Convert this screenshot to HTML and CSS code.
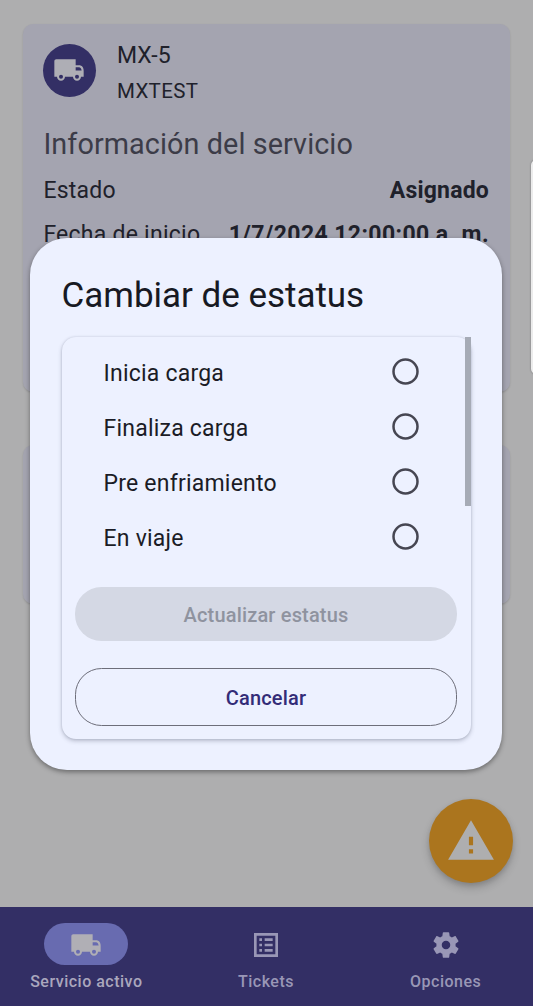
FILE: index.html
```html
<!DOCTYPE html>
<html lang="es">
<head>
<meta charset="utf-8">
<title>Servicio activo</title>
<link rel="stylesheet" href="styles.css">
</head>
<body>
<div class="app">
  <main class="content">
    <section class="card service">
      <header class="unit">
        <span class="avatar"><svg viewBox="0 0 24 24"><path fill-rule="evenodd" d="M19.500 8.500H17V4H2.500C1.600 4 1 4.600 1 5.500V17h2c0 1.660 1.340 3 3 3s3-1.340 3-3h6c0 1.660 1.340 3 3 3s3-1.340 3-3h2v-4.500c0-2.400-1.300-4-3.500-4zM6 18.500a1.500 1.500 0 1 1 0-3 1.500 1.500 0 0 1 0 3zM17 10h2.500c1 0 1.600.8 2 2.300H17V10zm1 8.500a1.500 1.500 0 1 1 0-3 1.500 1.500 0 0 1 0 3z"/></svg></span>
        <div class="unit-text"><div class="unit-name">MX-5</div><div class="unit-id">MXTEST</div></div>
      </header>
      <h2 class="info-title">Información del servicio</h2>
      <div class="row"><span>Estado</span><b>Asignado</b></div>
      <div class="row"><span>Fecha de inicio</span><b class="date">1/7/2024 12:00:00 a. m.</b></div>
    </section>
    <section class="card actions"></section>
    <button class="fab" aria-label="Alerta"><svg viewBox="0 0 24 24"><path d="M1 21h22L12 2 1 21zm12-3h-2v-2h2v2zm0-4h-2v-4h2v4z"/></svg></button>
  </main>
  <nav class="nav">
    <a class="nav-item active"><span class="pill"><svg viewBox="0 0 24 24"><path fill-rule="evenodd" d="M19.500 8.500H17V4H2.500C1.600 4 1 4.600 1 5.500V17h2c0 1.660 1.340 3 3 3s3-1.340 3-3h6c0 1.660 1.340 3 3 3s3-1.340 3-3h2v-4.500c0-2.400-1.300-4-3.500-4zM6 18.500a1.500 1.500 0 1 1 0-3 1.500 1.500 0 0 1 0 3zM17 10h2.500c1 0 1.600.8 2 2.300H17V10zm1 8.500a1.500 1.500 0 1 1 0-3 1.500 1.500 0 0 1 0 3z"/></svg></span><span class="nav-label">Servicio activo</span></a>
    <a class="nav-item"><span class="pill"><svg viewBox="0 0 24 24"><path fill-rule="evenodd" d="M3 3h18v18H3zM5 5v14h14V5zM7 7h2v2H7zM11 7h6v2h-6zM7 11h2v2H7zM11 11h6v2h-6zM7 15h2v2H7zM11 15h6v2h-6z"/></svg></span><span class="nav-label">Tickets</span></a>
    <a class="nav-item"><span class="pill"><svg viewBox="0 0 24 24"><path d="M19.140 12.940c.04-.3.060-.61.060-.94 0-.32-.02-.64-.07-.94l2.030-1.580c.18-.14.230-.41.120-.61l-1.920-3.320c-.12-.22-.37-.29-.59-.22l-2.390.96c-.5-.38-1.030-.7-1.620-.94l-.36-2.540c-.04-.24-.24-.41-.48-.41h-3.840c-.24 0-.43.170-.47.410l-.36 2.540c-.59.240-1.130.570-1.620.940l-2.390-.96c-.22-.08-.47 0-.59.220L2.740 8.870c-.12.210-.08.470.120.610l2.030 1.580c-.05.300-.09.630-.09.940s.02.640.070.940l-2.030 1.580c-.18.140-.23.410-.12.610l1.920 3.320c.12.220.370.290.590.220l2.390-.96c.5.380 1.030.700 1.620.940l.36 2.540c.05.240.240.410.480.410h3.840c.24 0 .44-.17.470-.41l.36-2.540c.59-.24 1.130-.56 1.620-.94l2.390.96c.22.080.470 0 .59-.22l1.920-3.320c.12-.22.070-.47-.12-.61l-2.010-1.580zM12 15.200c-1.770 0-3.200-1.430-3.200-3.200s1.430-3.200 3.200-3.200 3.200 1.430 3.200 3.200-1.430 3.200-3.200 3.200z"/></svg></span><span class="nav-label">Opciones</span></a>
  </nav>
  <div class="edge-handle"></div>
  <div class="dialog" role="dialog">
    <h1 class="dialog-title">Cambiar de estatus</h1>
    <div class="panel">
      <div class="options">
        <label class="option"><span>Inicia carga</span><svg class="radio" viewBox="0 0 27 27"><circle cx="13.500" cy="13.500" r="12"/></svg></label>
        <label class="option"><span>Finaliza carga</span><svg class="radio" viewBox="0 0 27 27"><circle cx="13.500" cy="13.500" r="12"/></svg></label>
        <label class="option"><span>Pre enfriamiento</span><svg class="radio" viewBox="0 0 27 27"><circle cx="13.500" cy="13.500" r="12"/></svg></label>
        <label class="option"><span>En viaje</span><svg class="radio" viewBox="0 0 27 27"><circle cx="13.500" cy="13.500" r="12"/></svg></label>
      </div>
      <button class="btn update" disabled>Actualizar estatus</button>
      <button class="btn cancel">Cancelar</button>
      <div class="scrollbar"></div>
    </div>
  </div>
</div>
</body>
</html>
```
FILE: styles.css
```css
* { box-sizing: border-box; }
body { margin: 0; font-family: Roboto, "Liberation Sans", sans-serif; color: #20212b; }
h1, h2 { margin: 0; font-weight: 400; }
button { font-family: inherit; border: 0; padding: 0; }
svg { display: block; fill: currentColor; }
.app { position: relative; width: 533px; height: 1006px; overflow: hidden; display: flex; flex-direction: column; background: #aeaeaf; }
.content { position: relative; flex: 1; padding: 24px 23px 0; }
.card { background: #a4a4b0; border-radius: 10px; box-shadow: 0 1px 2px rgba(0,0,0,.15); }
.service { height: 368px; padding: 20px 21px 20px 20.400px; }
.actions { height: 159px; margin-top: 53px; }
.unit { display: flex; gap: 20.600px; height: 74px; }
.avatar { width: 53px; height: 53px; border-radius: 50%; background: #332f65; color: #aeaeb5; display: grid; place-items: center; }
.avatar svg { width: 32px; height: 32px; margin-right: 1px; margin-bottom: 1px; }
.unit-name { font-size: 23px; line-height: 24px; letter-spacing: .1px; }
.unit-id { font-size: 20.500px; line-height: 24px; margin-top: 11px; letter-spacing: .35px; }
.info-title { font-size: 28.800px; line-height: 36px; margin-top: 8px; color: #3c3c48; letter-spacing: .08px; }
.row { display: flex; justify-content: space-between; font-size: 23px; line-height: 30px; margin-top: 14px; white-space: nowrap; letter-spacing: .25px; }
.row b { font-weight: 700; letter-spacing: .2px; }
.row .date { letter-spacing: .4px; }
.fab { position: absolute; right: 20.500px; bottom: 24px; width: 84px; height: 84px; border-radius: 50%; background: #ab751e; color: #aeaeaf; display: grid; place-items: center; box-shadow: 0 5px 9px rgba(0,0,0,.18), 0 2px 4px rgba(0,0,0,.1); }
.fab svg { width: 50px; height: 50px; }
.nav { height: 99px; background: #332f65; color: #9997b6; display: flex; gap: 7px; padding: 16px 1px 0 0; }
.nav-item { flex: 1; display: flex; flex-direction: column; align-items: center; }
.pill { width: 84px; height: 42px; border-radius: 21px; display: grid; place-items: center; }
.pill svg { width: 32px; height: 32px; margin-top: 1px; }
.active .pill { background: #686bb0; color: #b0afb5; }
.active .nav-label { color: #aaa7bd; }
.nav-label { font-size: 16px; font-weight: 500; line-height: 20px; margin-top: 7px; letter-spacing: .5px; white-space: nowrap; }
.edge-handle { position: absolute; left: 531px; top: 160px; width: 10px; height: 214px; border-radius: 7px; background: #ececec; box-shadow: 0 0 2px rgba(0,0,0,.4); }
.dialog { position: absolute; left: 30px; top: 238px; width: 472px; height: 532px; border-radius: 37px; background: #edf1ff; padding: 37px 31.500px 31px; box-shadow: 0 2px 5px rgba(0,0,0,.4); }
.dialog-title { font-size: 35px; line-height: 42px; color: #171923; margin-bottom: 20px; white-space: nowrap; letter-spacing: -.03px; }
.panel { position: relative; height: 402px; border-radius: 14px; padding: 7px 13.500px 13px; background: #edf1ff; box-shadow: 0 2px 4px rgba(60,65,90,.3), 0 0 2px rgba(60,65,90,.18); display: flex; flex-direction: column; }
.options { height: 243px; padding: 0 38.500px 0 28.500px; }
.option { display: flex; align-items: center; justify-content: space-between; height: 55.200px; font-size: 23px; color: #1b1c26; letter-spacing: .22px; }
.option span { padding-top: 3px; }
.radio { width: 27px; height: 27px; margin-bottom: 1px; fill: none; stroke: #464652; stroke-width: 2.500; }
.btn { font-size: 20px; font-weight: 500; border-radius: 26.500px; letter-spacing: .17px; padding-top: 2px; }
.update { height: 54px; background: #d4d8e4; color: #8f939f; }
.cancel { height: 58px; margin-top: 27px; background: transparent; border: 1px solid #6d6e7a; color: #332c78; }
.scrollbar { position: absolute; right: 0; top: 0; width: 6px; height: 169px; background: #a6abb6; }
```
